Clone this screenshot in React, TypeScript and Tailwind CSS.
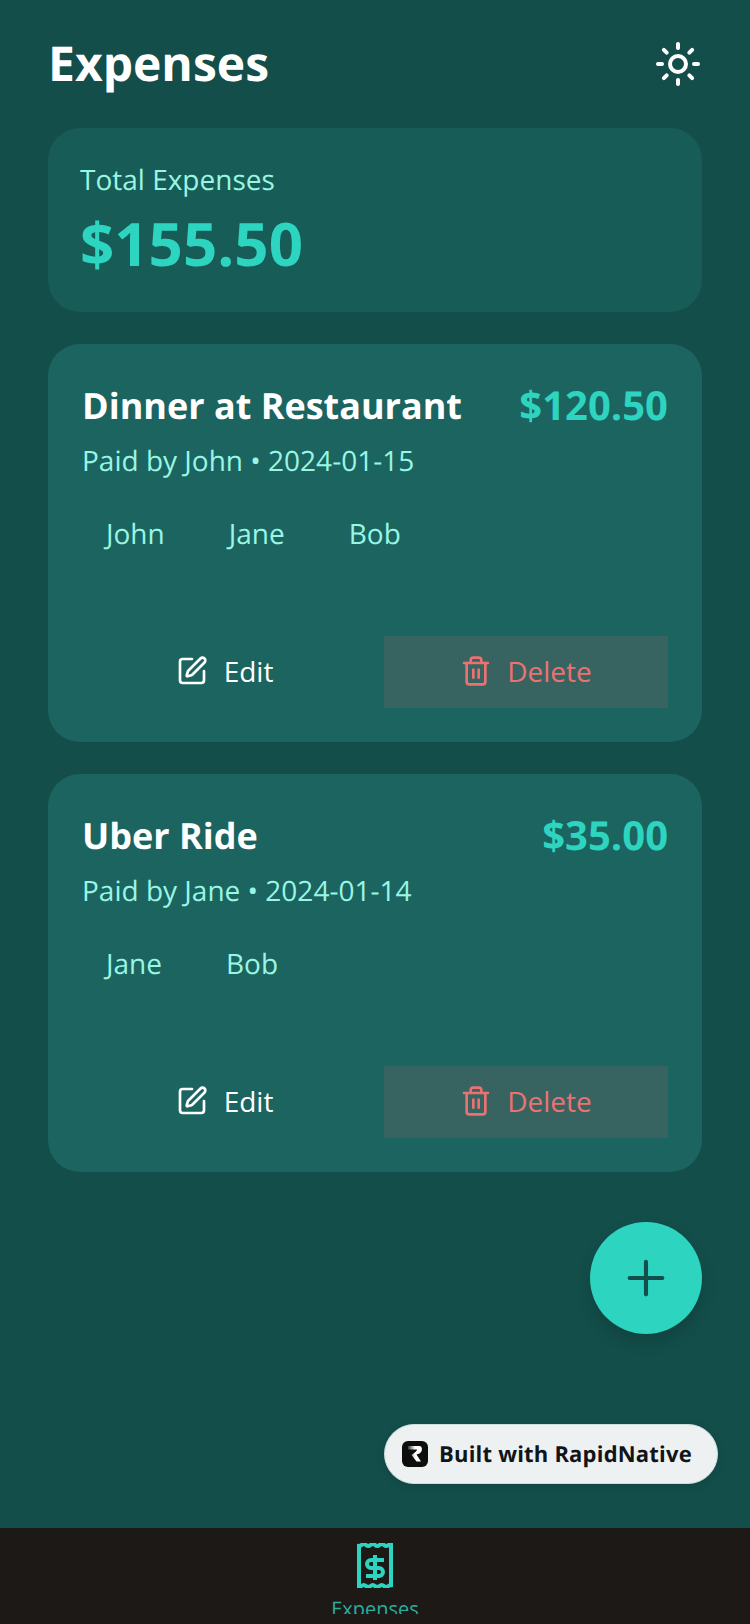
import { Plus, SquarePen, Sun, Trash2 } from "lucide-react";

type Expense = {
  title: string;
  amount: string;
  meta: string;
  people: string[];
};

const expenses: Expense[] = [
  {
    title: "Dinner at Restaurant",
    amount: "$120.50",
    meta: "Paid by John • 2024-01-15",
    people: ["John", "Jane", "Bob"],
  },
  {
    title: "Uber Ride",
    amount: "$35.00",
    meta: "Paid by Jane • 2024-01-14",
    people: ["Jane", "Bob"],
  },
];

function ExpenseCard({ expense }: { expense: Expense }) {
  return (
    <div className="flex h-[398px] flex-col rounded-[32px] bg-[#1c6460] p-[34px]">
      <div className="flex items-start justify-between pt-[3px]">
        <h2 className="text-[36px] leading-[50px] font-bold text-white">{expense.title}</h2>
        <span className="text-[40px] leading-[48px] font-bold text-[#2dd4bf]">{expense.amount}</span>
      </div>
      <p className="mt-[10px] text-[28px] leading-[40px] text-[#99f6e4]">{expense.meta}</p>
      <div className="mt-[25px] flex gap-[16px]">
        {expense.people.map((name) => (
          <span key={name} className="px-[24px] py-[8px] text-[28px] leading-[40px] text-[#99f6e4]">
            {name}
          </span>
        ))}
      </div>
      <div className="mt-auto flex justify-between">
        <button className="flex h-[72px] w-[284px] items-center justify-center gap-[16px] pb-[2px] pl-[1px] text-[28px] text-white">
          <SquarePen size={32} strokeWidth={2} />
          Edit
        </button>
        <button className="flex h-[72px] w-[284px] items-center justify-center gap-[15px] bg-[#376361] pb-[2px] text-[28px] text-[#ec7272]">
          <Trash2 size={32} strokeWidth={2} />
          Delete
        </button>
      </div>
    </div>
  );
}

function ReceiptIcon() {
  return (
    <svg width="36" height="45" viewBox="0 0 36 45" fill="none" stroke="#2dd4bf" strokeWidth="4">
      <path d="M2 1v43M34 1v43" />
      <path d="M0 2q2.250 2 4.500 0t4.500 0 4.500 0 4.500 0 4.500 0 4.500 0 4.500 0 4.500 0" />
      <path d="M0 43q2.250 2 4.500 0t4.500 0 4.500 0 4.500 0 4.500 0 4.500 0 4.500 0 4.500 0" />
      <path d="M27 17H14a4 4 0 0 0 0 8h8a4 4 0 0 1 0 8H9M18 12v25" />
    </svg>
  );
}

function RapidLogo() {
  return (
    <span className="flex h-[26px] w-[26px] items-center justify-center rounded-[6px] bg-[#0d0d0d]">
      <svg width="18" height="18" viewBox="0 0 18 18">
        <defs>
          <linearGradient id="logo-fade" x1="0" x2="1" y1="0" y2="0">
            <stop offset="0" stopColor="#333" />
            <stop offset="0.5" stopColor="#fff" />
          </linearGradient>
        </defs>
        <path
          d="M2 1h11.500c3 0 3.500 5.500 0 7.500l-3 1 4.500 7h-4.500l-5-6.500 4.500-3.500 1.200-2H2z"
          fill="url(#logo-fade)"
        />
      </svg>
    </span>
  );
}

export default function App() {
  return (
    <div className="flex h-[1624px] w-[750px] flex-col overflow-hidden bg-[#134e4a] font-['Open_Sans','Noto_Sans',sans-serif] [text-rendering:geometricPrecision]">
      <main className="relative flex-1 px-[48px]">
        <header className="flex h-[128px] items-center justify-between">
          <h1 className="text-[48px] font-bold text-white">Expenses</h1>
          <Sun size={48} strokeWidth={2} className="text-white" />
        </header>

        <section className="h-[184px] rounded-[32px] bg-[#175c56] px-[32px] pt-[32px]">
          <p className="text-[28px] leading-[40px] text-[#99f6e4]">Total Expenses</p>
          <p className="mt-[5px] text-[60px] leading-[76px] font-bold text-[#2dd4bf]">$155.50</p>
        </section>

        <div className="mt-[32px] flex flex-col gap-[32px]">
          {expenses.map((expense) => (
            <ExpenseCard key={expense.title} expense={expense} />
          ))}
        </div>

        <button className="absolute top-[1222px] right-[48px] flex h-[112px] w-[112px] items-center justify-center rounded-full bg-[#2dd4bf] text-[#134e4a] shadow-[0_8px_16px_rgba(0,0,0,0.15)]">
          <Plus size={56} strokeWidth={1.75} />
        </button>

        <div className="absolute top-[1424px] right-[32px] flex h-[60px] w-[334px] items-center gap-[11px] rounded-full border border-[#cfdcdc] bg-[#edf1f2] pl-[17px] shadow-[0_2px_8px_rgba(0,0,0,0.12)]">
          <RapidLogo />
          <span className="text-[22px] font-bold tracking-[0.2px] text-[#111418]">Built with RapidNative</span>
        </div>
      </main>

      <nav className="h-[97px] overflow-hidden border-t border-[#3b3a38] bg-[#1c1917]">
        <div className="flex flex-col items-center pt-[15px]">
          <ReceiptIcon />
          <div className="h-[26px] overflow-hidden">
            <span className="block text-[20px] leading-[41px] text-[#2dd4bf] opacity-80">Expenses</span>
          </div>
        </div>
      </nav>
    </div>
  );
}
